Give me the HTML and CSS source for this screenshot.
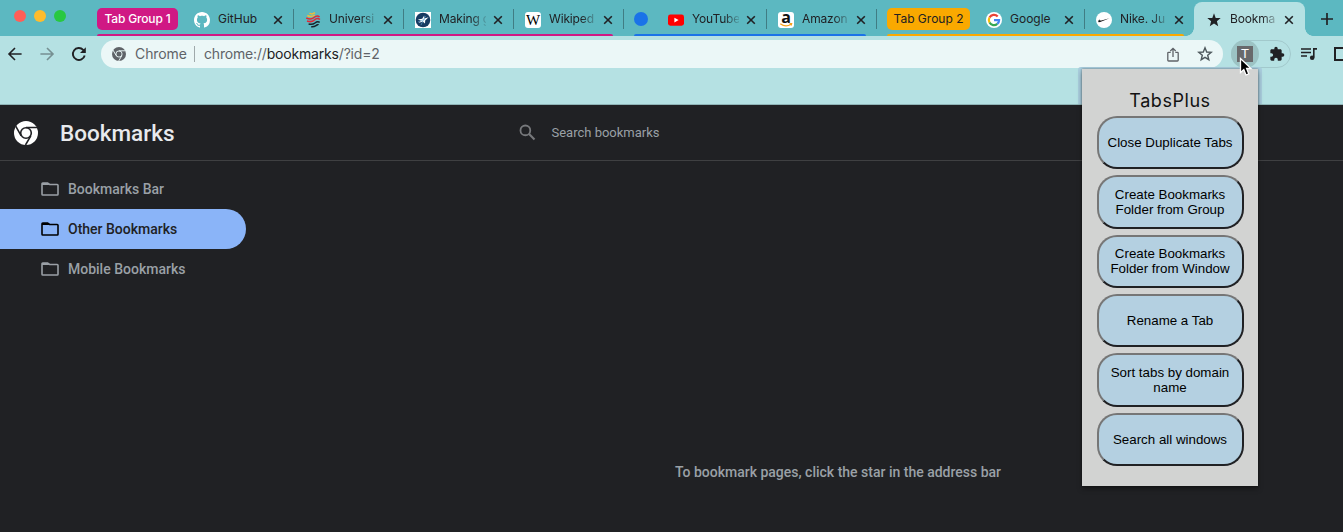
FILE: index.html
```
<!DOCTYPE html>
<html lang="en">
<head>
<meta charset="utf-8">
<title>Bookmarks</title>
<link rel="stylesheet" href="styles.css">
</head>
<body>
<svg class="defs" width="0" height="0">
  <symbol id="x" viewBox="0 0 10 10"><path d="M1.2 1.2l7.6 7.6M8.8 1.2L1.2 8.8" fill="none" stroke="currentColor" stroke-width="1.6"/></symbol>
  <symbol id="folder" viewBox="0 0 18 14"><path d="M1 2.7V1.8Q1 1 1.8 1H6.6L8.6 2.5H16.2Q17 2.5 17 3.3V12.2Q17 13 16.2 13H1.8Q1 13 1 12.2Z" fill="none" stroke="currentColor" stroke-width="1.6"/><path d="M1 1H6.6L8.6 3H1Z" fill="currentColor"/></symbol>
  <symbol id="chrome" viewBox="0 0 24 24"><circle cx="12" cy="12" r="12" fill="currentColor"/><g fill="none" stroke="var(--cut)" stroke-width="1.6"><circle cx="12" cy="12" r="5.3"/><path d="M12 6.5H23M7.2 14.8L1.7 5.2M16.8 14.8L11.5 24"/></g></symbol>
</svg>
<div class="browser">
  <div class="tabstrip">
    <div class="lights"><i class="red"></i><i class="yellow"></i><i class="green"></i></div>
    <div class="group pink">
      <span class="chip">Tab Group 1</span>
      <div class="tab first"><svg class="icon" viewBox="0 0 16 16"><path fill="#fff" d="M8 0C3.58 0 0 3.58 0 8c0 3.54 2.29 6.53 5.47 7.59.4.07.55-.17.55-.38 0-.19-.01-.82-.01-1.49-2.01.37-2.53-.49-2.69-.94-.09-.23-.48-.94-.82-1.13-.28-.15-.68-.52-.01-.53.63-.01 1.08.58 1.23.82.72 1.21 1.87.87 2.33.66.07-.52.28-.87.51-1.07-1.78-.2-3.64-.89-3.64-3.95 0-.87.31-1.59.82-2.15-.08-.2-.36-1.02.08-2.12 0 0 .67-.21 2.2.82.64-.18 1.32-.27 2-.27s1.36.09 2 .27c1.53-1.04 2.2-.82 2.2-.82.44 1.1.16 1.92.08 2.12.51.56.82 1.27.82 2.15 0 3.07-1.87 3.75-3.65 3.95.29.25.54.73.54 1.48 0 1.07-.01 1.93-.01 2.2 0 .21.15.46.55.38A8.01 8.01 0 0 0 16 8c0-4.42-3.58-8-8-8z"/></svg><span class="title whole">GitHub</span><svg class="close"><use href="#x"/></svg></div>
      <div class="tab"><svg class="icon" viewBox="0 0 16 16" fill="none"><path d="M4.5 1.2Q7 2.8 10 .7M2.3 3.5Q6 5.6 9.8 3" stroke="#eebb3d" stroke-width="1.5"/><path d="M1.3 6Q5.8 8.3 9 5.5T14.5 5M2 9Q6.5 10.7 9.4 8T14.9 7.5" stroke="#e32636" stroke-width="1.6"/><path d="M3.6 12Q7.5 13 10 11T14.7 10.4M6.2 14.7Q9 15 11 13.6T13.5 13" stroke="#17252c" stroke-width="1.5"/></svg><span class="title">Universi</span><svg class="close"><use href="#x"/></svg></div>
      <div class="tab"><svg class="icon" viewBox="0 0 16 16"><path fill="#fff" d="M0 0h16v16H0z"/><circle cx="8" cy="8" r="7.3" fill="#173b62"/><path d="M9.2 3.6L9.3 6.5 13.6 5.3 10.2 8.6 10 11.400 7.6 9.6 3.6 11 6 8.8 2.8 7.4 7.2 6.8Z" fill="#fff"/><path d="M3 10L10 7M6 13L10.5 4" stroke="#6aafdc" stroke-width=".6"/></svg><span class="title">Making g</span><svg class="close"><use href="#x"/></svg></div>
      <div class="tab"><span class="icon wiki">W</span><span class="title">Wikiped</span><svg class="close"><use href="#x"/></svg></div>
    </div>
    <div class="group blue">
      <span class="dot"></span>
      <div class="tab"><svg class="icon" viewBox="0 0 16 16"><rect y="2.500" width="16" height="11.200" rx="2.400" fill="red"/><path d="M6.400 5.800V10.400L10.600 8.100Z" fill="#fff"/></svg><span class="title">YouTube</span><svg class="close"><use href="#x"/></svg></div>
      <div class="tab"><span class="icon amazon">a<svg viewBox="0 0 16 16"><path d="M2.300 11.800Q7.800 15.700 13 12.200M11.600 11.700L13.600 11.600 13.100 13.500" fill="none" stroke="#f7a11b" stroke-width="1.300"/></svg></span><span class="title">Amazon</span><svg class="close"><use href="#x"/></svg></div>
    </div>
    <div class="group orange">
      <span class="chip">Tab Group 2</span>
      <div class="tab"><svg class="icon" viewBox="0 0 16 16"><circle cx="8" cy="8" r="8" fill="#fff"/><g fill="none" stroke-width="2.200"><path d="M3.500 5.500A5.100 5.100 0 0 1 11.700 4.400" stroke="#ea4335"/><path d="M3.500 5.500A5.100 5.100 0 0 0 3.500 10.500" stroke="#fbbc05"/><path d="M3.500 10.500A5.100 5.100 0 0 0 11.300 11.900" stroke="#34a853"/><path d="M11.300 11.900Q13.100 10.300 13.100 8.200H8" stroke="#4285f4"/></g></svg><span class="title whole">Google</span><svg class="close"><use href="#x"/></svg></div>
      <div class="tab last"><svg class="icon" viewBox="0 0 16 16"><circle cx="8" cy="8" r="8" fill="#fff"/><path d="M3.600 7.200C2 8.700 1.500 10.700 4.200 10.100L13.500 6.200 5.400 8.500C3.600 8.900 3.300 8.200 3.600 7.200Z" fill="#111"/></svg><span class="title">Nike. Ju</span><svg class="close"><use href="#x"/></svg></div>
    </div>
    <div class="tab active"><svg class="icon" viewBox="0 0 16 16"><path d="M8 1.200L9.700 5.900 14.700 6.100 10.900 9.200 12.200 14.200 8 11.400 3.800 14.200 5.100 9.200 1.300 6.100 6.300 5.900Z" fill="#202124"/></svg><span class="title">Bookma</span><svg class="close"><use href="#x"/></svg></div>
    <svg class="plus" viewBox="0 0 12 12"><path d="M6 0V12M0 6H12" stroke="#202124" stroke-width="1.700"/></svg>
  </div>

  <div class="toolbar">
    <svg class="nav" viewBox="0 0 16 16"><path d="M14.600 8H2M8 2L2 8L8 14" fill="none" stroke="#202124" stroke-width="1.600"/></svg>
    <svg class="nav dim" viewBox="0 0 16 16"><path d="M1.400 8H14M8 2L14 8L8 14" fill="none" stroke="#202124" stroke-width="1.600"/></svg>
    <svg class="nav" viewBox="0 0 16 16"><path d="M13.700 9.500A6 6 0 1 1 12.200 3.800L13.500 5.200" fill="none" stroke="#202124" stroke-width="1.900"/><path d="M14.800 1.200V7H9Z" fill="#202124"/></svg>
    <div class="omnibox">
      <svg class="site"><use href="#chrome"/></svg>
      <span class="scheme">Chrome</span><i class="bar"></i>
      <span class="url">chrome://<b>bookmarks</b>/?id=2</span>
      <svg class="share" viewBox="0 0 12 15"><path d="M3.700 5.300H1.600Q.8 5.300.8 6.100V13.200Q.8 14 1.600 14H10.400Q11.200 14 11.200 13.200V6.100Q11.200 5.300 10.400 5.300H8.300M6 10V1.400M3.300 4L6 1.300 8.700 4" fill="none" stroke="#5f6368" stroke-width="1.300"/></svg>
      <svg class="star" viewBox="0 0 16 16"><path d="M8 1.800L9.700 6 14.200 6.300 10.700 9.200 11.800 13.700 8 11.300 4.200 13.700 5.300 9.200 1.800 6.300 6.300 6Z" fill="none" stroke="#4f595d" stroke-width="1.400"/></svg>
    </div>
    <div class="extensions">
      <span class="ext-hover"><span class="ext-t">T</span></span>
      <svg class="puzzle" viewBox="0 0 24 24"><path fill="#202124" d="M20.500 11H19V7c0-1.100-.9-2-2-2h-4V3.500a2.500 2.500 0 0 0-5 0V5H4c-1.100 0-2 .9-2 2v3.800h1.500a2.700 2.700 0 0 1 0 5.400H2V20c0 1.100.9 2 2 2h3.800v-1.500a2.700 2.700 0 0 1 5.400 0V22H17c1.100 0 2-.9 2-2v-4h1.500a2.500 2.500 0 0 0 0-5z"/></svg>
    </div>
    <svg class="music" viewBox="0 0 16 14"><path d="M0 2H10M0 5.500H10M0 9H6M12.800 10.500V1.900H16" fill="none" stroke="#202124" stroke-width="1.600"/><circle cx="11.200" cy="10.700" r="2.300" fill="#202124"/></svg>
    <svg class="panel" viewBox="0 0 16 14"><path d="M1 1H15V13H1Z" fill="none" stroke="#202124" stroke-width="2"/></svg>
  </div>
  <div class="bookmark-bar"></div>

  <div class="page">
    <header class="header">
      <svg class="logo"><use href="#chrome"/></svg>
      <h1>Bookmarks</h1>
      <div class="search"><svg viewBox="0 0 16 16"><circle cx="6" cy="6" r="4.600" fill="none" stroke="currentColor" stroke-width="1.700"/><path d="M9.500 9.500L14.600 14.600" stroke="currentColor" stroke-width="2"/></svg><span>Search bookmarks</span></div>
    </header>
    <div class="content">
      <nav class="side">
        <div class="item"><svg><use href="#folder"/></svg>Bookmarks Bar</div>
        <div class="item selected"><svg><use href="#folder"/></svg>Other Bookmarks</div>
        <div class="item"><svg><use href="#folder"/></svg>Mobile Bookmarks</div>
      </nav>
      <p class="empty">To bookmark pages, click the star in the address bar</p>
    </div>
  </div>

  <div class="halo"></div>
  <div class="popup">
    <h2>TabsPlus</h2>
    <button>Close Duplicate Tabs</button>
    <button>Create Bookmarks Folder from Group</button>
    <button>Create Bookmarks Folder from Window</button>
    <button>Rename a Tab</button>
    <button>Sort tabs by domain name</button>
    <button>Search all windows</button>
  </div>
  <svg class="cursor" viewBox="0 0 14 20"><path d="M1.500 1.500V15.500L4.800 12.500 7 18 9.800 16.900 7.600 11.500H12Z" fill="#000" stroke="#fff" stroke-width="1.300"/></svg>
</div>
</body>
</html>
```
FILE: styles.css
```
* { box-sizing: border-box; }
body { margin: 0; font-family: Inter, sans-serif; overflow: hidden; }
svg { display: block; flex: none; }
.defs { position: absolute; }
.browser { position: relative; width: 1343px; height: 532px; overflow: hidden; display: flex; flex-direction: column; background: #202124; }

.tabstrip { height: 36px; display: flex; background: #5cb8c1; flex: none; }
.lights { display: flex; gap: 8px; padding: 9.5px 0 0 14px; width: 97px; flex: none; }
.lights i { width: 12px; height: 12px; border-radius: 50%; }
.red { background: #ff5f57; }
.yellow { background: #febc2e; }
.green { background: #28c840; }
.group { position: relative; display: flex; flex: none; }
.group::after { content: ""; position: absolute; left: 0; right: 11px; bottom: 0; height: 2px; background: var(--group); border-radius: 2px 2px 0 0; }
.pink { --group: #d01884; }
.blue { --group: #1a73e8; padding-left: 10px; }
.blue::after { left: 10px; }
.orange { --group: #faa900; padding-left: 10px; }
.orange::after { left: 10px; }
.chip { height: 22px; margin: 8px 5px 0 0; width: 81px; border-radius: 5px; background: var(--group); color: #fff; font-size: 12px; font-weight: 500; line-height: 22px; text-align: center; letter-spacing: -0.15px; white-space: nowrap; }
.orange .chip { width: 83px; color: #202124; font-weight: 400; letter-spacing: 0; }
.dot { width: 14px; height: 14px; margin: 12px 9px 0 0; border-radius: 50%; background: var(--group); }
.tab { position: relative; width: 110px; height: 36px; padding: 1px 10px 0 11px; display: flex; align-items: center; flex: none; color: #202124; }
.tab::after { content: ""; position: absolute; right: 0; top: 9px; width: 1px; height: 20px; background: #407d84; }
.last::after { display: none; }
.first { width: 111px; }
.tab .icon { width: 16px; height: 16px; margin: 2px 8px 0 0; flex: none; }
.title { width: 47px; overflow: hidden; white-space: nowrap; font-size: 12px; line-height: 18px; letter-spacing: -0.15px; -webkit-mask-image: linear-gradient(90deg, #000 68%, rgba(0,0,0,.15) 100%); mask-image: linear-gradient(90deg, #000 68%, rgba(0,0,0,.15) 100%); }
.whole { letter-spacing: 0; -webkit-mask-image: none; mask-image: none; }
.close { width: 10px; height: 10px; margin: 2px 0 0 7px; }
.first .close { margin-left: 8px; }
.wiki { background: #fff; border-radius: 3px; font: 15px/16px "Liberation Serif", serif; display: flex; justify-content: center; color: #000; }
.amazon { position: relative; background: #fff; border-radius: 3px; font: bold 16px/11px "Open Sans", sans-serif; text-align: center; color: #111; }
.amazon svg { position: absolute; inset: 0; }
.active { margin: 2px 0 0 -1px; width: 111px; height: 34px; padding: 0 10px 1px 12px; background: #b5e1e3; border-radius: 8px 8px 0 0; z-index: 1; }
.active::after, .active::before { content: ""; position: absolute; top: auto; bottom: 0; width: 8px; height: 8px; background: radial-gradient(circle at 0 0, transparent 7.5px, #b5e1e3 8px); }
.active::before { left: -8px; }
.active::after { right: -8px; background: radial-gradient(circle at 100% 0, transparent 7.5px, #b5e1e3 8px); }
.plus { width: 12px; height: 12px; margin: 13px 0 0 16px; }

.toolbar { height: 36px; display: flex; align-items: center; background: #b5e1e3; flex: none; padding-left: 7px; }
.nav { width: 16px; height: 16px; margin-right: 16px; }
.dim { opacity: .42; }
.omnibox { width: 1122px; height: 28px; margin-left: -2px; border-radius: 14px; background: #ebf7f7; display: flex; align-items: center; padding: 0 10px 0 11px; font-size: 14px; color: #5f6368; flex: none; }
.site { width: 14px; height: 14px; --cut: #ebf7f7; }
.scheme { margin-left: 9px; width: 52px; white-space: nowrap; padding-bottom: 2px; letter-spacing: -0.1px; }
.bar { width: 1px; height: 16px; margin: 0 9px 0 7px; background: #9fa9ab; }
.url { padding-bottom: 2px; letter-spacing: -0.18px; }
.url b { font-weight: 400; color: #202124; }
.share { width: 12px; height: 15px; margin-left: auto; }
.star { width: 16px; height: 16px; margin-left: 18px; }
.extensions { width: 60px; height: 28px; margin-left: 8px; border: 1px solid #a2c9cc; border-radius: 14px; display: flex; align-items: center; flex: none; }
.ext-hover { width: 28px; height: 28px; margin-left: -1px; border-radius: 50%; background: #9cc3c4; display: grid; place-items: center; }
.ext-t { width: 16px; height: 16px; background: #68696b; color: #fff; font: 13px/16px "Liberation Sans", sans-serif; text-align: center; }
.puzzle { width: 16px; height: 16px; margin-left: 10px; }
.music { width: 16px; height: 14px; margin-left: 10px; }
.panel { width: 16px; height: 14px; margin-left: 17px; }
.bookmark-bar { height: 33px; background: #b5e1e3; border-bottom: 1px solid #8fb4b7; flex: none; }

.page { flex: 1; font-family: Roboto, sans-serif; color: #9aa0a6; display: flex; flex-direction: column; }
.header { height: 56px; display: flex; align-items: center; padding-left: 14px; border-bottom: 1px solid #3f4042; }
.logo { width: 24px; height: 24px; color: #fff; --cut: #202124; }
h1 { margin: 0 0 0 22px; width: 459px; font-size: 22.5px; font-weight: 500; color: #e8eaed; }
.search { display: flex; align-items: center; gap: 15.5px; font-size: 13px; color: #9aa0a6; }
.search svg { width: 17px; height: 17px; color: #77797c; }
.content { display: flex; flex: 1; }
.side { width: 333px; padding-top: 8px; flex: none; }
.item { width: 246px; height: 40px; display: flex; align-items: center; gap: 9px; padding: 0 0 1px 41px; font-size: 14px; font-weight: 500; }
.item svg { width: 18px; height: 14px; margin-top: 1px; }
.selected { background: #8ab4f8; color: #202124; border-radius: 0 20px 20px 0; }
.selected svg { color: #000; }
.empty { flex: 1; margin: 303px 0 0; font-size: 14px; line-height: 17px; font-weight: 500; text-align: center; }

.halo { position: absolute; left: 1078px; top: 67px; width: 184px; height: 37px; background: #a9cddd; border-radius: 3px 3px 0 0; }
.popup { position: absolute; left: 1082px; top: 69px; width: 176px; height: 417px; padding: 21px 14.5px 0; background: #d2d3d2; box-shadow: 0 0 2px rgba(0,0,0,.4), 0 3px 5px rgba(0,0,0,.35); display: flex; flex-direction: column; gap: 6px; }
.popup h2 { margin: 0 0 -6px; height: 26px; font-size: 18px; line-height: 22px; font-weight: 400; letter-spacing: .55px; text-align: center; color: #111; }
.popup button { height: 53.33px; flex: none; border: 2px solid; border-color: #767676 #202124 #202124 #767676; border-radius: 20px; background: #b4d0e1; color: #000; padding: 0 6px; font: 13.333px/15px "Liberation Sans", sans-serif; }
.cursor { position: absolute; left: 1239px; top: 57px; width: 14px; height: 20px; }
```
